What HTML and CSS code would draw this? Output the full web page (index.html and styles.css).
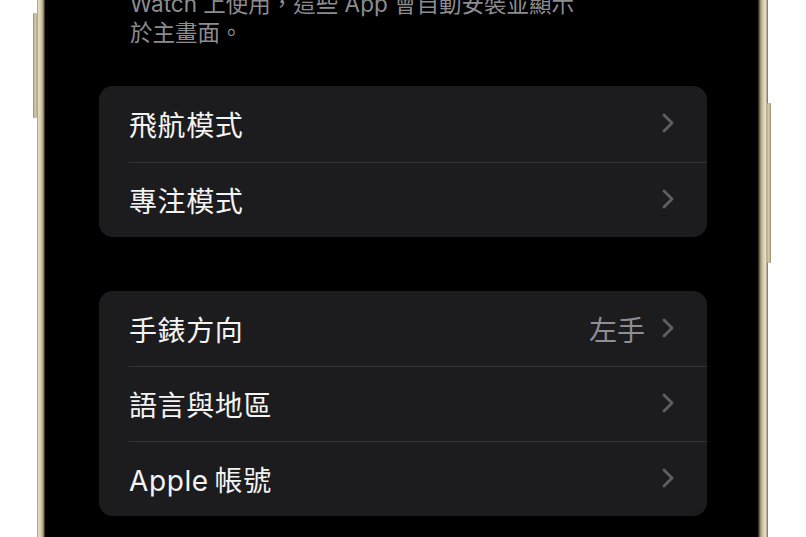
FILE: index.html
```html
<!DOCTYPE html>
<html lang="zh-Hant">
<head>
<meta charset="utf-8">
<title>設定</title>
<link rel="stylesheet" href="styles.css">
</head>
<body>
<div class="phone">
  <div class="btn btn-left"></div>
  <div class="btn btn-right"></div>
  <div class="frame frame-left"></div>
  <div class="screen">
    <p class="footnote">Watch 上使用，這些 App 會自動安裝並顯示<br>於主畫面。</p>
    <div class="group group-first">
      <div class="row"><span class="label">飛航模式</span><span class="trail"><svg class="chev" viewBox="0 0 14 22"><path d="M3 3 L11 11 L3 19"/></svg></span></div>
      <div class="row"><span class="label">專注模式</span><span class="trail"><svg class="chev" viewBox="0 0 14 22"><path d="M3 3 L11 11 L3 19"/></svg></span></div>
    </div>
    <div class="group group-second">
      <div class="row"><span class="label">手錶方向</span><span class="trail"><span class="value">左手</span><svg class="chev" viewBox="0 0 14 22"><path d="M3 3 L11 11 L3 19"/></svg></span></div>
      <div class="row"><span class="label">語言與地區</span><span class="trail"><svg class="chev" viewBox="0 0 14 22"><path d="M3 3 L11 11 L3 19"/></svg></span></div>
      <div class="row"><span class="label">Apple<span class="sp"> </span>帳號</span><span class="trail"><svg class="chev" viewBox="0 0 14 22"><path d="M3 3 L11 11 L3 19"/></svg></span></div>
    </div>
  </div>
  <div class="frame frame-right"></div>
</div>
</body>
</html>
```

FILE: styles.css
```css
html, body {
  margin: 0;
  padding: 0;
  background: #ffffff;
  overflow: hidden;
}

body {
  width: 806px;
  height: 537px;
  font-family: Inter, "Noto Sans CJK TC", sans-serif;
}

.phone {
  position: relative;
  margin-left: 37px;
  width: 731px;
  height: 537px;
  display: flex;
}

.frame {
  flex: none;
  height: 100%;
}

.frame-left {
  width: 8px;
  background: linear-gradient(to right, #9b9078 0%, #e6dcc2 20%, #d8cdaf 45%, #b8ac8c 70%, #5e5543 90%, #1a1712 100%);
}

.frame-right {
  width: 10px;
  background: linear-gradient(to right, #1a1712 0%, #5e5543 12%, #b3a686 30%, #d9ceb0 55%, #e8dfc6 75%, #a39780 90%, #6f6658 100%);
}

.btn {
  position: absolute;
  width: 4px;
  border-radius: 1px;
}

.btn-left {
  left: -4px;
  top: 13px;
  height: 105px;
  background: linear-gradient(to right, #8f8570, #d9cfb4 50%, #b5a98b);
}

.btn-right {
  right: -3px;
  top: 103px;
  height: 160px;
  background: linear-gradient(to right, #b5a98b, #d9cfb4 50%, #8f8570);
}

.screen {
  flex: 1;
  background: #000000;
  padding: 0 51px 0 54px;
  overflow: hidden;
}

.footnote {
  margin: -11px 0 0 0;
  padding-left: 31px;
  font-size: 22.5px;
  line-height: 29px;
  color: #8c8c91;
  white-space: nowrap;
}

.group {
  background: #1c1c1e;
  border-radius: 14px;
  padding-left: 30px;
  overflow: hidden;
}

.group-first {
  margin-top: 39px;
}

.group-first .row {
  height: 75.5px;
}

.group-second {
  margin-top: 54px;
}

.row {
  height: 75px;
  display: flex;
  align-items: center;
  justify-content: space-between;
  padding-right: 32px;
  box-sizing: border-box;
}

.row + .row {
  border-top: 1px solid #333336;
}

.label {
  font-size: 28px;
  color: #f4f4f4;
  letter-spacing: 0.6px;
}

.sp {
  letter-spacing: -2px;
}

.trail {
  display: flex;
  align-items: center;
  gap: 16px;
}

.value {
  font-size: 28px;
  color: #8e8e93;
}

.chev {
  width: 14px;
  height: 22px;
  margin-top: -2px;
}

.chev path {
  fill: none;
  stroke: #5f5f64;
  stroke-width: 2.8;
  stroke-linecap: round;
  stroke-linejoin: round;
}
```
